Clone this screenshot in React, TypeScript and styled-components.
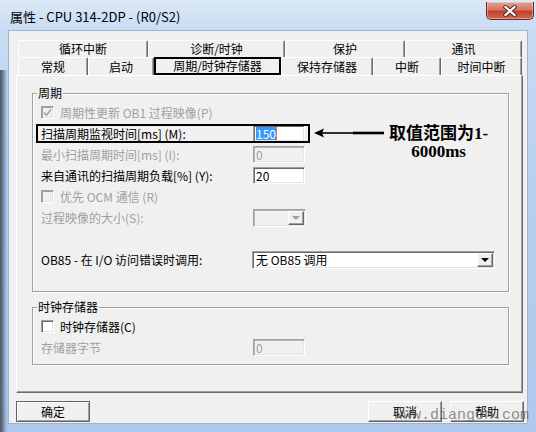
import styled, { createGlobalStyle, css } from "styled-components";

const UI_FONT = `"Noto Sans CJK SC", "Noto Sans", sans-serif`;

const GlobalStyle = createGlobalStyle`
  html, body {
    margin: 0;
    padding: 0;
  }
  body {
    width: 536px;
    height: 432px;
    overflow: hidden;
    background: #b9d1ee;
    font-family: ${UI_FONT};
  }
`;

const Window = styled.div`
  position: relative;
  width: 536px;
  height: 432px;
  display: flex;
  flex-direction: column;
  overflow: hidden;
  background:
    linear-gradient(to right, #4a5561 0, #6f8299 3px, #a3bde0 6px, transparent 8px) 0 70px / 8px 100% no-repeat,
    linear-gradient(to bottom, #dbe8f7 0, #c8dcf3 30px, #b7cfee 200px, #aec9ec 100%);
`;

const TitleBar = styled.div`
  height: 30px;
  display: flex;
  align-items: flex-start;
  flex: none;
`;

const Title = styled.div`
  padding: 8px 0 0 10px;
  font-family: "Noto Sans CJK SC", "Noto Sans", sans-serif;
  font-size: 13px;
  line-height: 17px;
  color: #000;
`;

const CloseButton = styled.div`
  margin: 2px 2px 0 auto;
  width: 48px;
  height: 18px;
  box-sizing: border-box;
  border: 1px solid #6e2a22;
  border-top: none;
  border-radius: 0 0 5px 5px;
  background: linear-gradient(to bottom, #e4a493 0, #d67563 45%, #c0402f 55%, #cf6a50 100%);
  box-shadow: inset 0 0 0 1px rgba(255, 255, 255, 0.35);
  display: flex;
  align-items: center;
  justify-content: center;
`;

const Client = styled.div`
  flex: 1;
  margin: 0 8px 8px 8px;
  box-sizing: border-box;
  border: 1px solid #9db3cf;
  background: #f0f0f0;
  padding: 9px 0 0 7px;
  display: flex;
  flex-direction: column;
  font-family: ${UI_FONT};
  font-size: 12px;
  color: #000;
`;

const TabRow = styled.div<{ $h: number }>`
  display: flex;
  height: ${(p) => p.$h}px;
  margin-left: 2px;
`;

const Tab = styled.div<{ $w: number; $marked?: boolean }>`
  width: ${(p) => p.$w}px;
  box-sizing: border-box;
  display: flex;
  align-items: center;
  justify-content: center;
  border-top: 1px solid #fff;
  border-left: 1px solid #fff;
  border-right: 1px solid #696969;
  box-shadow: inset -1px 0 0 #a0a0a0;
  border-radius: 2px 2px 0 0;
  line-height: 14px;
  white-space: nowrap;
  ${(p) =>
    p.$marked &&
    css`
      border: 2px solid #000;
      border-radius: 0;
      box-shadow: none;
    `}
`;

const Panel = styled.div`
  width: 507px;
  height: 318px;
  box-sizing: border-box;
  border-top: 1px solid #fff;
  border-left: 1px solid #fff;
  border-right: 1px solid #696969;
  border-bottom: 1px solid #696969;
  box-shadow: inset -1px -1px 0 #a0a0a0;
  padding: 17px 13px 0 15px;
`;

const Group = styled.div<{ $pt: number; $pb: number; $mt?: number }>`
  position: relative;
  margin-top: ${(p) => p.$mt ?? 0}px;
  border: 1px solid #a0a0a0;
  box-shadow: inset 1px 1px 0 #fff, 1px 1px 0 #fff;
  padding: ${(p) => p.$pt}px 8px ${(p) => p.$pb}px 8px;
`;

const Legend = styled.div`
  position: absolute;
  top: -8px;
  left: 4px;
  padding: 0 1px;
  background: #f0f0f0;
  line-height: 14px;
`;

const Row = styled.div<{ $marked?: boolean }>`
  position: relative;
  display: flex;
  align-items: center;
  height: 21px;
  ${(p) =>
    p.$marked &&
    css`
      &::after {
        content: "";
        position: absolute;
        left: -5px;
        top: 1px;
        width: 274px;
        height: 19px;
        box-sizing: border-box;
        border: 2px solid #000;
      }
    `}
`;

const Label = styled.span<{ $disabled?: boolean }>`
  width: 212px;
  flex: none;
  white-space: nowrap;
  color: ${(p) => (p.$disabled ? "#a0a0a0" : "#000")};
`;

const CheckLabel = styled.label<{ $disabled?: boolean }>`
  display: flex;
  align-items: center;
  gap: 6px;
  white-space: nowrap;
  color: ${(p) => (p.$disabled ? "#a0a0a0" : "#000")};
`;

const Box = styled.span<{ $disabled?: boolean }>`
  width: 13px;
  height: 13px;
  box-sizing: border-box;
  border: 1px solid;
  border-color: #a0a0a0 #fff #fff #a0a0a0;
  box-shadow: inset 1px 1px 0 ${(p) => (p.$disabled ? "#a0a0a0" : "#696969")}, inset -1px -1px 0 #e3e3e3;
  background: ${(p) => (p.$disabled ? "#f0f0f0" : "#fff")};
  display: flex;
  align-items: center;
  justify-content: center;
`;

const Field = styled.div<{ $disabled?: boolean; $w?: number }>`
  width: ${(p) => p.$w ?? 52}px;
  height: 17px;
  box-sizing: border-box;
  border: 1px solid;
  border-color: #a0a0a0 #fff #fff #a0a0a0;
  box-shadow: inset 1px 1px 0 ${(p) => (p.$disabled ? "#b4b4b4" : "#696969")}, inset -1px -1px 0 #e3e3e3;
  background: ${(p) => (p.$disabled ? "#f0f0f0" : "#fff")};
  color: ${(p) => (p.$disabled ? "#a0a0a0" : "#000")};
  padding: 0 2px;
  line-height: 15px;
  display: flex;
  align-items: center;
  white-space: nowrap;
`;

const Selected = styled.span`
  background: #3399ff;
  color: #fff;
  line-height: 13px;
  border-right: 1px solid #e07a30;
`;

const Combo = styled(Field)`
  height: 18px;
  padding: 0 0 0 3px;
  justify-content: space-between;
`;

const DropButton = styled.span<{ $disabled?: boolean }>`
  width: 16px;
  height: 14px;
  margin-right: 1px;
  box-sizing: border-box;
  border: 1px solid;
  border-color: #fff #696969 #696969 #fff;
  box-shadow: inset -1px -1px 0 #a0a0a0;
  background: #f0f0f0;
  display: flex;
  align-items: center;
  justify-content: center;
  &::after {
    content: "";
    border-left: 4px solid transparent;
    border-right: 4px solid transparent;
    border-top: 4px solid ${(p) => (p.$disabled ? "#a0a0a0" : "#000")};
  }
`;

const Callout = styled.div`
  position: absolute;
  left: 272px;
  top: 0;
  display: flex;
  align-items: flex-start;
  gap: 4px;
  pointer-events: none;
`;

const CalloutText = styled.div`
  margin-top: 2px;
  font-family: "Liberation Serif", "Noto Sans CJK SC", serif;
  font-weight: bold;
  font-size: 17px;
  line-height: 18px;
  text-align: center;
  color: #000;
  white-space: nowrap;
`;

const ButtonBar = styled.div`
  display: flex;
  gap: 8px;
  margin-top: 8px;
  width: 508px;
`;

const Button = styled.div<{ $default?: boolean }>`
  width: 74px;
  height: 21px;
  box-sizing: border-box;
  border: 1px solid;
  border-color: #fff #646464 #646464 #fff;
  box-shadow: inset -1px -1px 0 #a0a0a0;
  background: #f0f0f0;
  display: flex;
  align-items: center;
  justify-content: center;
  &:first-child {
    margin-right: auto;
  }
  ${(p) =>
    p.$default &&
    css`
      border-color: #646464;
      box-shadow: inset 1px 1px 0 #fff, inset -1px -1px 0 #a0a0a0;
    `}
`;

const Watermark = styled.div`
  position: absolute;
  left: 394px;
  top: 407px;
  font-family: "Liberation Mono", monospace;
  font-size: 15px;
  color: rgba(70, 70, 70, 0.6);
  pointer-events: none;
`;

const row1 = [
  { t: "循环中断", w: 130 },
  { t: "诊断/时钟", w: 137 },
  { t: "保护", w: 120 },
  { t: "通讯", w: 117 },
];

const row2 = [
  { t: "常规", w: 70 },
  { t: "启动", w: 66 },
  { t: "周期/时钟存储器", w: 127, marked: true },
  { t: "保持存储器", w: 92 },
  { t: "中断", w: 68 },
  { t: "时间中断", w: 81 },
];

function Check({ checked, disabled }: { checked?: boolean; disabled?: boolean }) {
  return (
    <Box $disabled={disabled}>
      {checked && (
        <svg width="9" height="9" viewBox="0 0 9 9">
          <path d="M1 4.5 L3.5 7 L8 1.5" fill="none" stroke={disabled ? "#a0a0a0" : "#000"} strokeWidth="1.6" />
        </svg>
      )}
    </Box>
  );
}

export default function App() {
  return (
    <>
      <GlobalStyle />
      <Window>
        <TitleBar>
          <Title>属性 - CPU 314-2DP - (R0/S2)</Title>
          <CloseButton>
            <svg width="14" height="12" viewBox="0 0 14 12">
              <path d="M2.5 2 L11.5 10 M11.5 2 L2.5 10" stroke="#5a2a24" strokeWidth="4.2" strokeLinecap="square" />
              <path d="M2.5 2 L11.5 10 M11.5 2 L2.5 10" stroke="#fff" strokeWidth="2.2" strokeLinecap="square" />
            </svg>
          </CloseButton>
        </TitleBar>

        <Client>
          <TabRow $h={17}>
            {row1.map((t) => (
              <Tab key={t.t} $w={t.w}>{t.t}</Tab>
            ))}
          </TabRow>
          <TabRow $h={18}>
            {row2.map((t) => (
              <Tab key={t.t} $w={t.w} $marked={t.marked}>{t.t}</Tab>
            ))}
          </TabRow>

          <Panel>
            <Group $pt={8} $pb={21}>
              <Legend>周期</Legend>
              <Row>
                <CheckLabel $disabled>
                  <Check checked disabled />
                  周期性更新 OB1 过程映像(P)
                </CheckLabel>
              </Row>
              <Row $marked>
                <Label>扫描周期监视时间[ms] (M):</Label>
                <Field>
                  <Selected>150</Selected>
                </Field>
                <Callout>
                  <svg width="72" height="14" viewBox="0 0 72 14" style={{ marginTop: 3 }}>
                    <path d="M1 7 L11 2.5 L9 7 L11 11.5 Z" fill="#000" />
                    <path d="M8 7 L40 7" stroke="#000" strokeWidth="1.6" />
                    <path d="M40 7 L71 7" stroke="#000" strokeWidth="2.6" />
                  </svg>
                  <CalloutText>
                    取值范围为1-
                    <br />
                    6000ms
                  </CalloutText>
                </Callout>
              </Row>
              <Row>
                <Label $disabled>最小扫描周期时间[ms] (I):</Label>
                <Field $disabled>0</Field>
              </Row>
              <Row>
                <Label>来自通讯的扫描周期负载[%] (Y):</Label>
                <Field>20</Field>
              </Row>
              <Row>
                <CheckLabel $disabled>
                  <Check disabled />
                  优先 OCM 通信 (R)
                </CheckLabel>
              </Row>
              <Row>
                <Label $disabled>过程映像的大小(S):</Label>
                <Combo $disabled $w={53}>
                  <span />
                  <DropButton $disabled />
                </Combo>
              </Row>
              <Row />
              <Row>
                <Label>OB85 - 在 I/O 访问错误时调用:</Label>
                <Combo $w={243} style={{ marginLeft: -1 }}>
                  <span>无 OB85 调用</span>
                  <DropButton />
                </Combo>
              </Row>
            </Group>

            <Group $pt={8} $pb={6} $mt={15}>
              <Legend>时钟存储器</Legend>
              <Row>
                <CheckLabel>
                  <Check />
                  时钟存储器(C)
                </CheckLabel>
              </Row>
              <Row>
                <Label $disabled>存储器字节</Label>
                <Field $disabled>0</Field>
              </Row>
            </Group>
          </Panel>

          <ButtonBar>
            <Button $default>确定</Button>
            <Button>取消</Button>
            <Button>帮助</Button>
          </ButtonBar>
        </Client>

        <Watermark>www.diangon.com</Watermark>
      </Window>
    </>
  );
}
